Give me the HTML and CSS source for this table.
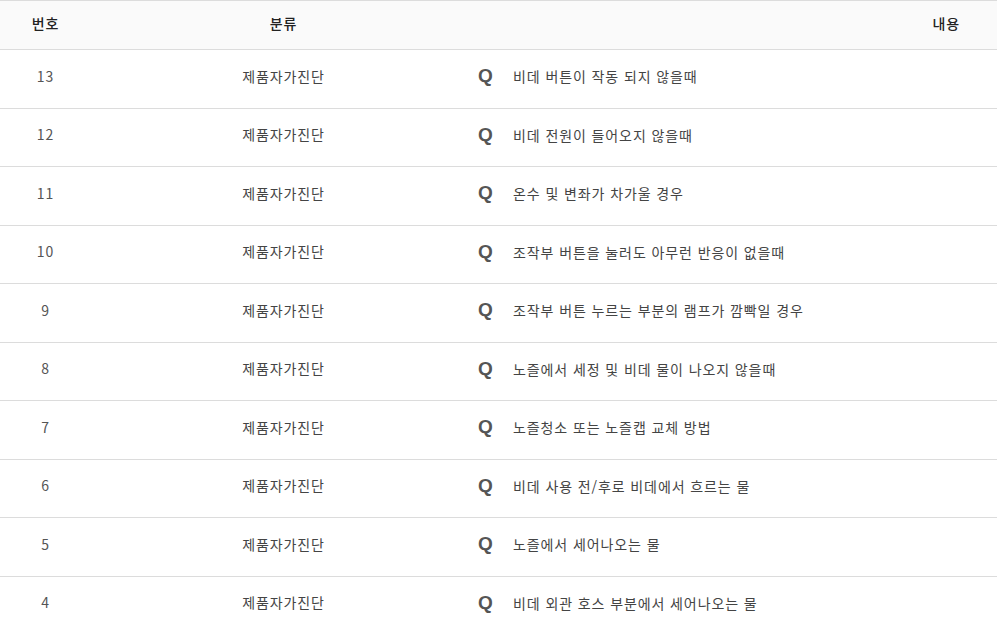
FILE: index.html
```html
<!DOCTYPE html>
<html lang="ko">
<head>
<meta charset="utf-8">
<link rel="stylesheet" href="styles.css">
</head>
<body>
<table class="faq">
  <thead>
    <tr>
      <th class="c-no">번호</th>
      <th class="c-cat">분류</th>
      <th class="c-sub">내용</th>
    </tr>
  </thead>
  <tbody>
    <tr><td class="c-no">13</td><td class="c-cat">제품자가진단</td><td class="c-sub"><span class="q">Q</span><span class="t">비데 버튼이 작동 되지 않을때</span></td></tr>
    <tr><td class="c-no">12</td><td class="c-cat">제품자가진단</td><td class="c-sub"><span class="q">Q</span><span class="t">비데 전원이 들어오지 않을때</span></td></tr>
    <tr><td class="c-no">11</td><td class="c-cat">제품자가진단</td><td class="c-sub"><span class="q">Q</span><span class="t">온수 및 변좌가 차가울 경우</span></td></tr>
    <tr><td class="c-no">10</td><td class="c-cat">제품자가진단</td><td class="c-sub"><span class="q">Q</span><span class="t">조작부 버튼을 눌러도 아무런 반응이 없을때</span></td></tr>
    <tr><td class="c-no">9</td><td class="c-cat">제품자가진단</td><td class="c-sub"><span class="q">Q</span><span class="t">조작부 버튼 누르는 부분의 램프가 깜빡일 경우</span></td></tr>
    <tr><td class="c-no">8</td><td class="c-cat">제품자가진단</td><td class="c-sub"><span class="q">Q</span><span class="t">노즐에서 세정 및 비데 물이 나오지 않을때</span></td></tr>
    <tr><td class="c-no">7</td><td class="c-cat">제품자가진단</td><td class="c-sub"><span class="q">Q</span><span class="t">노즐청소 또는 노즐캡 교체 방법</span></td></tr>
    <tr><td class="c-no">6</td><td class="c-cat">제품자가진단</td><td class="c-sub"><span class="q">Q</span><span class="t">비데 사용 전/후로 비데에서 흐르는 물</span></td></tr>
    <tr><td class="c-no">5</td><td class="c-cat">제품자가진단</td><td class="c-sub"><span class="q">Q</span><span class="t">노즐에서 세어나오는 물</span></td></tr>
    <tr><td class="c-no">4</td><td class="c-cat">제품자가진단</td><td class="c-sub"><span class="q">Q</span><span class="t">비데 외관 호스 부분에서 세어나오는 물</span></td></tr>
  </tbody>
</table>
</body>
</html>
```

FILE: styles.css
```css
html, body {
  margin: 0;
  padding: 0;
  background: #fff;
}
body {
  font-family: "Noto Sans CJK KR", "Noto Sans", sans-serif;
  font-size: 14px;
  color: #444;
  letter-spacing: 0.9px;
}
.faq {
  width: 100%;
  border-collapse: collapse;
  table-layout: fixed;
  border-top: 1px solid #dcdcdc;
}
.faq th {
  background: #fafafa;
  height: 44px;
  font-weight: 500;
  font-size: 14px;
  color: #222;
  border-bottom: 1px solid #dcdcdc;
  padding: 0 0 4px 0;
}
.faq td {
  height: 51.5px;
  border-bottom: 1px solid #dcdcdc;
  padding: 0 0 6px 0;
  vertical-align: middle;
}
.c-no {
  width: 91px;
  text-align: center;
}
.c-cat {
  width: 385px;
  text-align: center;
}
th.c-sub {
  text-align: right;
  padding-right: 37px;
}
td.c-sub {
  text-align: left;
  padding-left: 2px;
}
td.c-no {
  color: #555;
}
.q {
  display: inline-block;
  width: 35px;
  font-family: "Liberation Sans", Arial, sans-serif;
  font-weight: bold;
  font-size: 19px;
  letter-spacing: 0;
  color: #555;
  vertical-align: middle;
}
.t {
  vertical-align: middle;
  color: #444;
}
```
